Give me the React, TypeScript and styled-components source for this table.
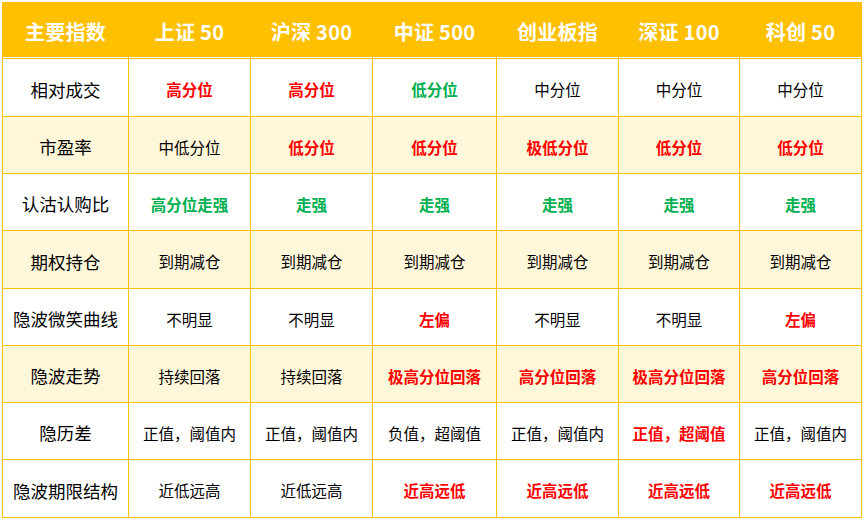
import React from "react";
import styled, { createGlobalStyle } from "styled-components";

const Global = createGlobalStyle`
  html, body { margin: 0; padding: 0; background: #ffffff; }
  body { font-family: "Noto Sans CJK SC", "Noto Sans", sans-serif; }
`;

const Page = styled.div`
  padding: 2px;
`;

const Grid = styled.div`
  display: grid;
  width: max-content;
  grid-template-columns: 125px 121px 121px 123px 121px 120px 121px;
  grid-template-rows: 55px 57px 56px 56px 57px 56px 56px 56px 57px;
  gap: 1px;
  padding: 1px;
  background: #ffc000;
`;

const HeadCell = styled.div`
  box-sizing: border-box;
  background: #ffc000;
  border-bottom: 1px solid #ffffff;
  display: flex;
  align-items: center;
  justify-content: center;
  padding-top: 2px;
  color: #ffffff;
  font-weight: 700;
  font-size: 20px;
  letter-spacing: 0.3px;
`;

type Tone = "n" | "r" | "g";

const Cell = styled.div<{ $alt: boolean; $tone: Tone; $label?: boolean }>`
  background: ${(p) => (p.$alt ? "#fff7d9" : "#ffffff")};
  display: flex;
  align-items: center;
  justify-content: center;
  padding-top: 3px;
  box-sizing: border-box;
  font-size: ${(p) => (p.$label ? "17.5px" : "15.5px")};
  font-weight: ${(p) => (p.$tone === "n" ? 400 : 700)};
  color: ${(p) =>
    p.$tone === "r" ? "#ff0000" : p.$tone === "g" ? "#00b050" : "#000000"};
  white-space: nowrap;
`;

const headers = ["主要指数", "上证 50", "沪深 300", "中证 500", "创业板指", "深证 100", "科创 50"];

type Row = { label: string; alt: boolean; cells: [string, Tone][] };

const rows: Row[] = [
  {
    label: "相对成交",
    alt: false,
    cells: [["高分位", "r"], ["高分位", "r"], ["低分位", "g"], ["中分位", "n"], ["中分位", "n"], ["中分位", "n"]],
  },
  {
    label: "市盈率",
    alt: true,
    cells: [["中低分位", "n"], ["低分位", "r"], ["低分位", "r"], ["极低分位", "r"], ["低分位", "r"], ["低分位", "r"]],
  },
  {
    label: "认沽认购比",
    alt: false,
    cells: [["高分位走强", "g"], ["走强", "g"], ["走强", "g"], ["走强", "g"], ["走强", "g"], ["走强", "g"]],
  },
  {
    label: "期权持仓",
    alt: true,
    cells: [["到期减仓", "n"], ["到期减仓", "n"], ["到期减仓", "n"], ["到期减仓", "n"], ["到期减仓", "n"], ["到期减仓", "n"]],
  },
  {
    label: "隐波微笑曲线",
    alt: false,
    cells: [["不明显", "n"], ["不明显", "n"], ["左偏", "r"], ["不明显", "n"], ["不明显", "n"], ["左偏", "r"]],
  },
  {
    label: "隐波走势",
    alt: true,
    cells: [["持续回落", "n"], ["持续回落", "n"], ["极高分位回落", "r"], ["高分位回落", "r"], ["极高分位回落", "r"], ["高分位回落", "r"]],
  },
  {
    label: "隐历差",
    alt: false,
    cells: [["正值，阈值内", "n"], ["正值，阈值内", "n"], ["负值，超阈值", "n"], ["正值，阈值内", "n"], ["正值，超阈值", "r"], ["正值，阈值内", "n"]],
  },
  {
    label: "隐波期限结构",
    alt: false,
    cells: [["近低远高", "n"], ["近低远高", "n"], ["近高远低", "r"], ["近高远低", "r"], ["近高远低", "r"], ["近高远低", "r"]],
  },
];

export default function App() {
  return (
    <>
      <Global />
      <Page>
        <Grid>
          {headers.map((h) => (
            <HeadCell key={h}>{h}</HeadCell>
          ))}
          {rows.map((r) => (
            <React.Fragment key={r.label}>
              <Cell $alt={r.alt} $tone="n" $label>
                {r.label}
              </Cell>
              {r.cells.map(([t, tone], i) => (
                <Cell key={i} $alt={r.alt} $tone={tone}>
                  {t}
                </Cell>
              ))}
            </React.Fragment>
          ))}
        </Grid>
      </Page>
    </>
  );
}
